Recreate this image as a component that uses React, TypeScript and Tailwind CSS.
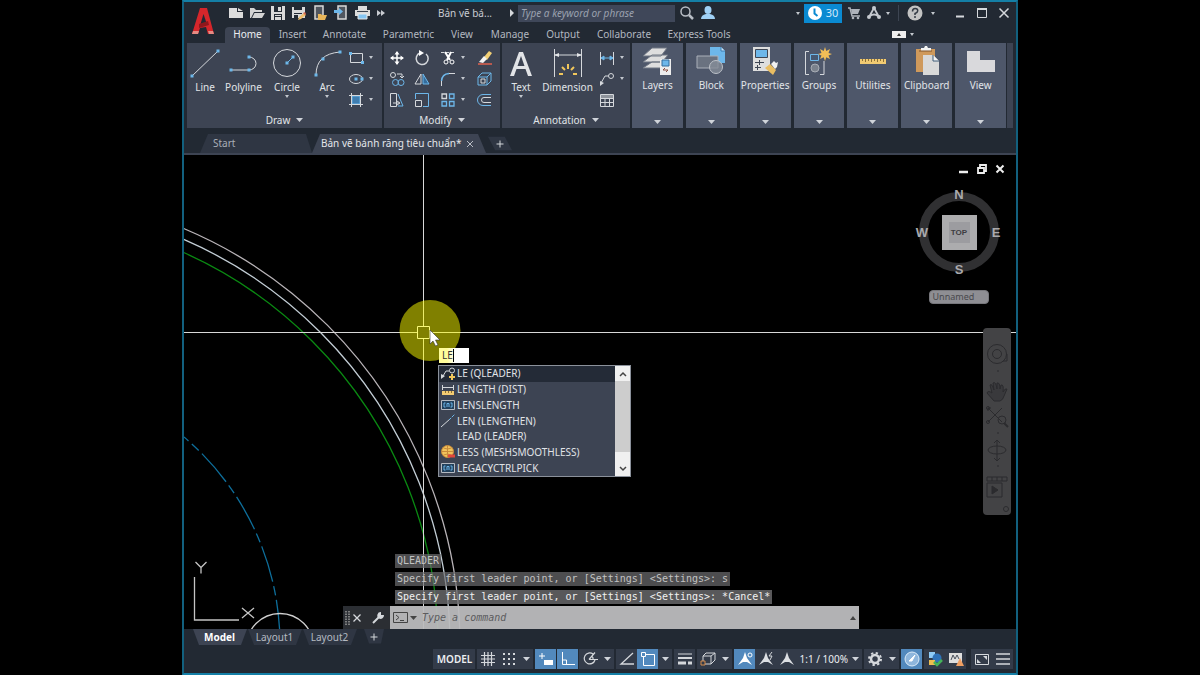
import type { ReactNode } from "react";
import clsx from "clsx";

type IconProps = {
	w?: number;
	h?: number;
	children: ReactNode;
};

function Icon({ w = 16, h = 16, children }: IconProps) {
	return (
		<svg
			width={w}
			height={h}
			viewBox={`0 0 ${w} ${h}`}
			fill="none"
			stroke="#d5d8dc"
			strokeWidth="1"
			className="shrink-0"
			aria-hidden="true"
		>
			{children}
		</svg>
	);
}

function Caret({ small = false }: { small?: boolean }) {
	return small ? (
		<svg width="4" height="3" viewBox="0 0 4 3" className="shrink-0" aria-hidden="true">
			<path d="M0 0h4L2 3z" fill="#c3c7ce" />
		</svg>
	) : (
		<svg width="7" height="4" viewBox="0 0 7 4" className="shrink-0" aria-hidden="true">
			<path d="M0 0h7L3.5 4z" fill="#d0d4da" />
		</svg>
	);
}

function Dot({ x, y }: { x: number; y: number }) {
	return <rect x={x - 1.5} y={y - 1.5} width="3" height="3" fill="#6db7ea" stroke="none" />;
}

const quickAccess: { name: string; icon: ReactNode }[] = [
	{
		name: "New",
		icon: <path d="M1 3h8v4h6v6H1zM10 3l5 3h-5z" fill="#dcdcdc" stroke="none" />,
	},
	{
		name: "Open",
		icon: <path d="M1 13V3h4l2 2h6v2H5L2 13zM5.500 8H16l-3 5H3z" fill="#d4d4d4" stroke="none" />,
	},
	{
		name: "Save",
		icon: (
			<>
				<path d="M1 1h14v14H1z" fill="#d9d9d9" stroke="none" />
				<path d="M4 1h8v6H4zM4 9h8v6H4z" fill="#222933" stroke="none" />
				<path d="M8 2h3v4H8zM5 10h6v1H5zM5 12h6v3H5z" fill="#d9d9d9" stroke="none" />
			</>
		),
	},
	{
		name: "Save As",
		icon: (
			<>
				<path d="M1 2h13v11H1z" fill="#d9d9d9" stroke="none" />
				<path d="M3 2h8v3H3zM3 8h8v1H3zM3 10h4v3H3z" fill="#222933" stroke="none" />
				<path d="M7 15l1-3 5-4 2 2-5 4z" fill="#f0c070" stroke="none" />
				<path d="M12 8l2-1 1 2-1 1z" fill="#d96b52" stroke="none" />
			</>
		),
	},
	{
		name: "Open from Web & Mobile",
		icon: (
			<>
				<path d="M3 1h8v13H3z" fill="#50565f" stroke="#d9d9d9" strokeWidth="1.500" />
				<path d="M6 15V9h3l1 1h5l-2 5H6z" fill="#e9b659" stroke="none" />
			</>
		),
	},
	{
		name: "Save to Web & Mobile",
		icon: (
			<>
				<path d="M5 1h8v13H5z" fill="#50565f" stroke="#d9d9d9" strokeWidth="1.500" />
				<path d="M1 5h5V3l4 3.500L6 10V8H1z" fill="#6db7ea" stroke="none" />
			</>
		),
	},
	{
		name: "Plot",
		icon: (
			<>
				<path d="M4 1h9v4H4zM1 5h15v6H1z" fill="#dcdcdc" stroke="none" />
				<path d="M3 6h11v1H3z" fill="#3b4350" stroke="none" />
				<path d="M4 9h9v5H4z" fill="#85c5f2" stroke="#e8e8e8" />
			</>
		),
	},
];

function TitleBar() {
	return (
		<div className="flex h-[22px] items-center pr-px text-[#c9ccd2]">
			<div className="flex w-[213px] items-center">
				{quickAccess.map((item) => (
					<button
						key={item.name}
						type="button"
						aria-label={item.name}
						className="flex w-[21px] shrink-0 justify-center"
					>
						<Icon>{item.icon}</Icon>
					</button>
				))}
				<button type="button" aria-label="More" className="ml-1">
					<Icon w={10} h={8}>
						<path d="M1 1l4 3-4 3zM5 1l4 3-4 3z" fill="#c9ccd2" stroke="none" />
					</Icon>
				</button>
			</div>
			<span className="w-[72px] whitespace-nowrap text-[10px]">Bản vẽ bá...</span>
			<svg width="4" height="8" viewBox="0 0 4 8" aria-hidden="true">
				<path d="M0 0l4 4-4 4z" fill="#d5d8dc" />
			</svg>
			<input
				aria-label="Search"
				placeholder="Type a keyword or phrase"
				className="ml-1 h-[17px] w-[157px] min-w-0 bg-[#3f4759] px-[3px] text-[10px] italic outline-none placeholder:text-[#9ba2af]"
			/>
			<button type="button" aria-label="Search help" className="ml-1">
				<Icon>
					<circle cx="6.500" cy="6.500" r="4.500" strokeWidth="1.500" stroke="#b9bec6" />
					<path d="M10 10l4 4" strokeWidth="2.500" stroke="#b9bec6" />
				</Icon>
			</button>
			<button type="button" aria-label="Account" className="ml-[5px]">
				<Icon>
					<ellipse cx="8" cy="5" rx="3.500" ry="4" fill="#9fd0f5" stroke="none" />
					<path d="M1 14q0-4 5-5h4q5 1 5 5z" fill="#9fd0f5" stroke="none" />
				</Icon>
			</button>
			<div className="ml-auto flex h-full items-center">
				<Caret small />
				<button
					type="button"
					className="ml-1 flex h-[19px] w-[38px] items-center justify-center gap-1 bg-[#0a8ad2] text-[11px] text-[#cfe8fa]"
				>
					<Icon w={14} h={14}>
						<circle cx="7" cy="7" r="7" fill="#fff" stroke="none" />
						<path d="M6.500 2.500v5l3 2.500" stroke="#0a8ad2" strokeWidth="2" />
					</Icon>
					30
				</button>
				<button type="button" aria-label="App Store" className="ml-1">
					<Icon>
						<path d="M2 3h2l2 8h8" stroke="#aeb3bb" strokeWidth="1.500" />
						<path d="M5 4h9l-2 5H6z" fill="#aeb3bb" stroke="none" />
						<circle cx="7" cy="13" r="1.300" fill="#aeb3bb" stroke="none" />
						<circle cx="12" cy="13" r="1.300" fill="#aeb3bb" stroke="none" />
					</Icon>
				</button>
				<button type="button" aria-label="Autodesk App" className="ml-1 flex items-center gap-1">
					<Icon>
						<path d="M8 3L3 12M8 3l5 9M4 11q4-3 8 0" stroke="#c5c9cf" strokeWidth="1.800" />
						<circle cx="8" cy="3" r="2" fill="#c5c9cf" stroke="none" />
						<circle cx="3" cy="12" r="2" fill="#c5c9cf" stroke="none" />
						<circle cx="13" cy="12" r="2" fill="#c5c9cf" stroke="none" />
					</Icon>
					<Caret small />
				</button>
				<span className="mx-2 h-4 w-px bg-[#3d4552]" />
				<button type="button" aria-label="Help" className="flex items-center gap-2">
					<Icon>
						<circle cx="8" cy="8" r="7.500" fill="#c3c3c3" stroke="none" />
						<path d="M5.500 6.500q0-3 2.700-3t2.500 2.300Q10.500 7.500 8 8.500v1.500" stroke="#333a44" strokeWidth="1.500" />
						<circle cx="8" cy="12" r="1" fill="#333a44" stroke="none" />
					</Icon>
					<Caret small />
				</button>
				<button type="button" aria-label="Minimize" className="ml-[14px] flex w-[22px] justify-center">
					<Icon w={12} h={12}>
						<path d="M2 9.500h8" strokeWidth="2" />
					</Icon>
				</button>
				<button type="button" aria-label="Maximize" className="flex w-[22px] justify-center">
					<Icon w={12} h={12}>
						<path d="M1.500 1.500h9v9h-9z" />
						<path d="M1 2h10" strokeWidth="2" />
					</Icon>
				</button>
				<button type="button" aria-label="Close" className="flex w-[22px] justify-center">
					<Icon w={12} h={12}>
						<path d="M1.500 1.500l9 9M10.500 1.500l-9 9" strokeWidth="1.500" />
					</Icon>
				</button>
			</div>
		</div>
	);
}

const ribbonTabs = [
	{ name: "Home", width: "w-[45px]" },
	{ name: "Insert", width: "w-[45px]" },
	{ name: "Annotate", width: "w-[59px]" },
	{ name: "Parametric", width: "w-[69px]" },
	{ name: "View", width: "w-[38px]" },
	{ name: "Manage", width: "w-[58px]" },
	{ name: "Output", width: "w-[48px]" },
	{ name: "Collaborate", width: "w-[74px]" },
	{ name: "Express Tools", width: "w-[76px]" },
];

function RibbonTabs() {
	return (
		<nav className="flex h-[19px] items-end text-[10px] text-[#b3b8c0]">
			{ribbonTabs.map((tab) => (
				<button
					key={tab.name}
					type="button"
					className={clsx(
						"h-4 shrink-0 whitespace-nowrap pb-[2px] text-center leading-[14px]",
						tab.width,
						tab.name === "Home" && "rounded-t-sm bg-[#3d4453] text-[#eceef1]",
					)}
				>
					{tab.name}
				</button>
			))}
			<button type="button" aria-label="Minimize ribbon" className="ml-auto mr-[102px] flex h-[18px] items-center gap-1">
				<Icon w={14} h={7}>
					<path d="M0 0h14v7H0z" fill="#eee" stroke="none" />
					<path d="M5 5h4L7 2z" fill="#333" stroke="none" />
				</Icon>
				<Caret small />
			</button>
		</nav>
	);
}

type LargeToolProps = {
	label: string;
	width: string;
	caret?: boolean;
	children: ReactNode;
};

function LargeTool({ label, width, caret, children }: LargeToolProps) {
	return (
		<button type="button" className={clsx("flex shrink-0 flex-col items-center", width)}>
			{children}
			<span className="whitespace-nowrap leading-4">{label}</span>
			{caret ? <Caret small /> : null}
		</button>
	);
}

function SmallTool({ label, caret, children }: { label: string; caret?: boolean; children: ReactNode }) {
	return (
		<button type="button" aria-label={label} className="flex h-[21px] items-center gap-[5px]">
			<Icon>{children}</Icon>
			{caret ? <Caret small /> : null}
		</button>
	);
}

type PanelProps = {
	title: string;
	width: string;
	children: ReactNode;
};

function Panel({ title, width, children }: PanelProps) {
	return (
		<section className={clsx("flex shrink-0 flex-col bg-[#3d4453]", width)}>
			<div className="flex h-[68px] pt-1">{children}</div>
			<button type="button" className="flex h-[17px] items-center justify-center gap-[6px] leading-4">
				{title}
				<Caret />
			</button>
		</section>
	);
}

function DrawPanel() {
	return (
		<Panel title="Draw" width="w-[195px]">
			<LargeTool label="Line" width="w-[36px]">
				<Icon w={32} h={32}>
					<path d="M3 29L29 4" />
					<Dot x={3} y={29} />
					<Dot x={29} y={4} />
				</Icon>
			</LargeTool>
			<LargeTool label="Polyline" width="w-[41px]">
				<Icon w={32} h={32}>
					<path d="M3 23h18a7 6.500 0 0 0 0-13" />
					<Dot x={3} y={23} />
					<Dot x={21} y={23} />
					<Dot x={21} y={10} />
				</Icon>
			</LargeTool>
			<LargeTool label="Circle" width="w-[46px]" caret>
				<Icon w={32} h={32}>
					<circle cx="16" cy="16" r="13.500" />
					<path d="M16 16l6-6" stroke="#6db7ea" />
					<Dot x={16} y={16} />
					<Dot x={22} y={10} />
				</Icon>
			</LargeTool>
			<LargeTool label="Arc" width="w-[34px]" caret>
				<Icon w={32} h={32}>
					<path d="M5 28Q5 7 29 5" />
					<Dot x={5} y={28} />
					<Dot x={12} y={12} />
					<Dot x={29} y={5} />
				</Icon>
			</LargeTool>
			<div className="ml-1 flex flex-col">
				<SmallTool label="Rectangle" caret>
					<path d="M2.500 3.500h12v9h-12z" />
					<Dot x={2.5} y={3.5} />
					<Dot x={14.5} y={12.5} />
				</SmallTool>
				<SmallTool label="Ellipse" caret>
					<ellipse cx="8" cy="8" rx="6.500" ry="4.500" />
					<Dot x={8} y={8} />
					<Dot x={14} y={8} />
				</SmallTool>
				<SmallTool label="Hatch" caret>
					<path d="M4 4h8v8H4z" fill="#3f7db0" stroke="#6db7ea" />
					<path d="M1 3.500h14M1 12.500h14M3.500 1v14M12.500 1v14" />
				</SmallTool>
			</div>
		</Panel>
	);
}

function ModifyPanel() {
	return (
		<Panel title="Modify" width="w-[116px]">
			<div className="ml-[5px] grid h-[63px] grid-cols-[25px_26px_36px_20px]">
				<SmallTool label="Move">
					<path d="M8 2v12M2 8h12" strokeWidth="1.500" stroke="#fff" />
					<path d="M8 1l2.500 3.500h-5zM8 15l2.500-3.500h-5zM1 8l3.500-2.500v5zM15 8l-3.500-2.500v5z" fill="#fff" stroke="none" />
				</SmallTool>
				<SmallTool label="Rotate">
					<path d="M6 3a6 6 0 1 0 6 1" strokeWidth="1.500" />
					<path d="M5 0l5 3-5 3z" fill="#fff" stroke="none" />
				</SmallTool>
				<SmallTool label="Trim" caret>
					<path d="M1 2.500h14" strokeDasharray="3 2" />
					<path d="M5 2l5 8M11 2L7 10" stroke="#fff" strokeWidth="2" />
					<circle cx="6" cy="12" r="2" stroke="#fff" />
					<circle cx="12" cy="12" r="2" stroke="#fff" />
				</SmallTool>
				<SmallTool label="Erase">
					<path d="M8 7l5-6 3 2-5 7z" fill="#f2cf75" stroke="none" />
					<path d="M3 12l5-6 3 3-4 4z" fill="#f3f3f3" stroke="none" />
					<path d="M2 14h14" stroke="#e0604c" strokeWidth="1.500" />
				</SmallTool>
				<SmallTool label="Copy">
					<circle cx="4" cy="4" r="2.500" />
					<path d="M8 3h5v3M11 5l2 2 2-2" />
					<circle cx="6.500" cy="11.500" r="3" stroke="#6db7ea" />
					<circle cx="12" cy="11.500" r="3" stroke="#6db7ea" />
				</SmallTool>
				<SmallTool label="Mirror">
					<path d="M7 3v10H1z" />
					<path d="M9 3v10h6z" fill="#356d9c" stroke="#6db7ea" />
				</SmallTool>
				<SmallTool label="Fillet" caret>
					<path d="M1.500 15V9" stroke="#d5d8dc" />
					<path d="M1.500 10Q2 3 9 2.500" stroke="#6db7ea" strokeWidth="1.500" />
					<path d="M9 2.500h6" />
				</SmallTool>
				<SmallTool label="Explode">
					<path d="M2 6h9v8H2zM2 6l4-4h9l-4 4M15 2v8l-4 4" stroke="#6db7ea" />
					<path d="M5 8h4v4H5z" />
				</SmallTool>
				<SmallTool label="Stretch">
					<path d="M1.500 1.500h6v13h-6z" />
					<path d="M9 2l5 12H9" stroke="#6db7ea" />
					<path d="M4 11h6M8 9l3 2-3 2" />
				</SmallTool>
				<SmallTool label="Scale">
					<path d="M1.500 7V1.500h13v13H9" stroke="#6db7ea" />
					<path d="M1.500 8.500h6v6h-6z" />
				</SmallTool>
				<SmallTool label="Array" caret>
					<path d="M2 2h4.500v4.500H2z" strokeWidth="1.300" />
					<path d="M9.500 2H14v4.500H9.500zM2 9.500h4.500V14H2zM9.500 9.500H14V14H9.500z" stroke="#6db7ea" strokeWidth="1.300" />
				</SmallTool>
				<SmallTool label="Offset">
					<path d="M15 2.500H7a5.500 5.500 0 0 0 0 11h8" stroke="#6db7ea" />
					<path d="M15 5.500H8a2.500 2.500 0 0 0 0 5h7" />
				</SmallTool>
			</div>
		</Panel>
	);
}

function AnnotationPanel() {
	return (
		<Panel title="Annotation" width="w-[128px]">
			<LargeTool label="Text" width="w-[38px]" caret>
				<Icon w={32} h={32}>
					<path d="M5 29L14 5h4l9 24h-4l-2.500-7h-9L9 29zM12.500 19h7L16 9z" fill="#e2e4e7" stroke="none" />
				</Icon>
			</LargeTool>
			<LargeTool label="Dimension" width="w-[55px]">
				<Icon w={32} h={32}>
					<path d="M2.500 2v28M29.500 2v28M3 8h26" />
					<path d="M2 8l5-2v4zM30 8l-5-2v4z" fill="#e2e4e7" stroke="none" />
					<path d="M16 17v5M10 20l3 3M22 20l-3 3M7 27h4M21 27h4" stroke="#f1c75c" strokeWidth="2" />
				</Icon>
			</LargeTool>
			<div className="ml-1 flex flex-col">
				<SmallTool label="Linear" caret>
					<path d="M1.500 2v13M14.500 2v13" />
					<path d="M2 8h12M2 8l3-2v4zM14 8l-3-2v4z" stroke="#6db7ea" fill="#6db7ea" />
				</SmallTool>
				<SmallTool label="Leader" caret>
					<circle cx="12" cy="5" r="2.500" />
					<path d="M9.500 5H6L2 12" />
					<path d="M1 15v-5l4 2z" fill="#d5d8dc" stroke="none" />
				</SmallTool>
				<SmallTool label="Table">
					<path d="M1.500 2.500h13v12h-13zM1 6.500h14M1 10.500h14M6 6v8M10.500 6v8" />
					<path d="M2 3h12v3H2z" fill="#8f949c" stroke="none" />
				</SmallTool>
			</div>
		</Panel>
	);
}

const collapsedPanels: { name: string; icon: ReactNode }[] = [
	{
		name: "Layers",
		icon: (
			<>
				<path d="M2 23L11 17h16l-7 6zM2 17l9-7h16l-6 7zM2 11L11 3h15l-6 8z" fill="#dedede" stroke="#6f7683" />
				<path d="M19 14h11v16H19z" fill="#ededed" stroke="none" />
				<path d="M21 15h7v6h-7z" fill="#6db7ea" stroke="#356d9c" />
				<path d="M22 25h5M24 23l-2 2M25 27l2-2" stroke="#8a4f42" />
			</>
		),
	},
	{
		name: "Block",
		icon: (
			<>
				<path d="M15 2h11l4 4v12H15z" fill="#6db7ea" stroke="none" />
				<path d="M26 2v4h4" fill="#c7e5fa" stroke="#3f7db0" />
				<path d="M2 11h21v12H2z" fill="#6a7280" stroke="#aab0b9" />
				<circle cx="21" cy="22" r="6.500" fill="#858c97" fillOpacity=".8" stroke="#bcc1c8" />
			</>
		),
	},
	{
		name: "Properties",
		icon: (
			<>
				<path d="M4 2h17v24H4z" fill="#dedede" stroke="none" />
				<path d="M6.500 4.500h12v8h-12z" fill="#6db7ea" stroke="#3e4654" />
				<path d="M6 17.500h9M6 22.500h6M10.500 15v5M8.500 20v5" stroke="#3e4654" />
				<path d="M16 23l5-4 6 6-3 5z" fill="#e9bd62" stroke="none" />
				<path d="M22 19l3-3 2 2 2-1-1 5-2 2z" fill="#f1f1f1" stroke="none" />
			</>
		),
	},
	{
		name: "Groups",
		icon: (
			<>
				<path d="M6 6.500H2.500v23H6M17 29.500h4V16" />
				<path d="M7.500 9.500h8v6h-8z" fill="#465871" stroke="#6db7ea" />
				<circle cx="12" cy="23" r="4" fill="#7b828d" stroke="#a8adb5" />
				<path d="M22 2l1.300 4L27 4l-1.500 4L29 9l-3.500 1.500L27 14l-3.700-1.700L22 16l-1.300-3.700L17 14l1.500-3.500L15 9l3.500-1L17 4l3.700 2z" fill="#f1bd57" stroke="none" />
			</>
		),
	},
	{
		name: "Utilities",
		icon: (
			<>
				<path d="M3 14h26v5H3z" fill="#f2cb72" stroke="none" />
				<path d="M5.500 14v2M8.500 14v3M11.500 14v2M14.500 14v3M17.500 14v2M20.500 14v3M23.500 14v2M26.500 14v3" stroke="#8c7137" />
			</>
		),
	},
	{
		name: "Clipboard",
		icon: (
			<>
				<path d="M5 4h19v23H5z" fill="#cf995b" stroke="none" />
				<path d="M10 6V3h3l1-2h2l1 2h3v3z" fill="#f4f4f4" stroke="none" />
				<path d="M8 6h13" stroke="#80552a" />
				<path d="M12 10h10l6 6v14H12z" fill="#d9d9d9" stroke="none" />
				<path d="M22 10v6h6" fill="#f4f4f4" stroke="#3e5c78" />
			</>
		),
	},
	{
		name: "View",
		icon: <path d="M2 6h13v9h15v12H2z" fill="#d9d9dc" stroke="none" />,
	},
];

function Ribbon() {
	return (
		<div className="mx-[3px] flex h-[85px] gap-[2px] text-[10px] text-[#e1e4e8]">
			<DrawPanel />
			<ModifyPanel />
			<AnnotationPanel />
			<div className="flex flex-1 gap-[3px]">
				{collapsedPanels.map((panel) => (
					<button
						key={panel.name}
						type="button"
						className="flex min-w-0 flex-1 flex-col items-center bg-[#4e576a] pt-[2px]"
					>
						<Icon w={32} h={32}>
							{panel.icon}
						</Icon>
						<span className="whitespace-nowrap leading-4">{panel.name}</span>
						<span className="mb-1 mt-auto">
							<Caret />
						</span>
					</button>
				))}
				<div className="-ml-[2px] w-[6px] bg-[#3d4453]" />
			</div>
		</div>
	);
}

function DocumentTabs() {
	return (
		<div className="flex h-[27px] items-end border-b-2 border-[#3d4453] pl-4 text-[10px]">
			<button
				type="button"
				className="h-[19px] w-[112px] bg-[#2f3643] pl-[13px] text-left text-[#a9aeb7] [clip-path:polygon(8px_0,106px_0,112px_100%,0_100%)]"
			>
				Start
			</button>
			<div className="flex h-[19px] w-[174px] items-center justify-between bg-[#3d4453] pl-[9px] pr-[12px] text-[#e4e6ea] [clip-path:polygon(8px_0,166px_0,100%_100%,0_100%)]">
				<button type="button" className="whitespace-nowrap">
					Bản vẽ bánh răng tiêu chuẩn*
				</button>
				<button type="button" aria-label="Close drawing">
					<Icon w={8} h={8}>
						<path d="M1 1l6 6M7 1L1 7" stroke="#b9bdc5" />
					</Icon>
				</button>
			</div>
			<button
				type="button"
				aria-label="New drawing"
				className="ml-[2px] flex h-[19px] w-6 items-center justify-center bg-[#2f3643] [clip-path:polygon(0_15%,70%_15%,100%_85%,30%_85%)]"
			>
				<Icon w={8} h={8}>
					<path d="M4 .5v7M.5 4h7" />
				</Icon>
			</button>
		</div>
	);
}

function Drawing() {
	return (
		<svg className="absolute inset-0 h-full w-full" fill="none" aria-hidden="true">
			{/* gear outline, pitch circle and bore, all around one centre */}
			<g transform="translate(-184 -155)">
				<circle cx="8" cy="645" r="452" stroke="#b9b4b8" strokeWidth="1.300" />
				<circle cx="8" cy="645" r="442" stroke="#c3ced6" strokeWidth="1.300" />
				<circle cx="8" cy="645" r="430" stroke="#0a8a12" strokeWidth="1.300" />
				<path
					d="M184 437A272 272 0 0 1 280 645"
					stroke="#0e6f9c"
					strokeWidth="1.300"
					strokeDasharray="37 4.500 9.500 4.500"
					strokeDashoffset="31"
				/>
				<circle cx="280" cy="647" r="33.500" stroke="#d0d0d0" strokeWidth="1.300" />
				<path d="M194.500 577v43H239" stroke="#c4c4c4" strokeWidth="1.300" />
				<path d="M242 608l12 10M254 608l-12 10M195.500 562l5.500 5.500 5.500-5.500M201 567.500v6" stroke="#c4c4c4" strokeWidth="1.300" />
				<path d="M423.500 155v2000M184 332.500h3000" stroke="#d8d8d8" />
				<path d="M417.500 326.500h12v12h-12z" fill="#000" stroke="#f2f2f2" />
				<circle cx="430" cy="330.500" r="30.500" fill="#ffff00" fillOpacity=".5" />
				<path d="M430 330v14l3-3 2.500 5 2.500-1-2.500-5h4.500z" fill="#fff" stroke="#333" strokeWidth=".6" />
			</g>
		</svg>
	);
}

function VariableIcon() {
	return (
		<>
			<path d="M.5 2.500h13v9H.5z" fill="#23415c" stroke="#b5bac2" />
			<path d="M4.500 5H3v4h1.500M9.500 5H11v4H9.500M6 9V5.500h2V9" stroke="#6db7ea" />
		</>
	);
}

const suggestions: { text: string; icon?: ReactNode }[] = [
	{
		text: "LE (QLEADER)",
		icon: (
			<>
				<circle cx="11" cy="3.500" r="2.500" />
				<path d="M8.500 4H5L2 9" />
				<path d="M0 12V7l4 2z" fill="#d5d8dc" stroke="none" />
				<path d="M11 7v6M8 10h6" stroke="#f1c75c" strokeWidth="2" />
			</>
		),
	},
	{
		text: "LENGTH (DIST)",
		icon: (
			<>
				<path d="M1.500 2v5M12.500 2v5M2 4.500h10" />
				<path d="M1 8h12v4H1z" fill="#f2cb72" stroke="none" />
				<path d="M4.500 8v2M7.500 8v2M10.500 8v2" stroke="#8c7137" />
			</>
		),
	},
	{ text: "LENSLENGTH", icon: <VariableIcon /> },
	{
		text: "LEN (LENGTHEN)",
		icon: (
			<>
				<path d="M0 13l9-8" />
				<path d="M8 6l6-6" stroke="#6db7ea" strokeDasharray="3 1" />
			</>
		),
	},
	{ text: "LEAD (LEADER)" },
	{
		text: "LESS (MESHSMOOTHLESS)",
		icon: (
			<>
				<circle cx="6.500" cy="6.500" r="6" fill="#f0c35c" stroke="#c98b3a" />
				<path d="M6.500 1v11M1 6.500h11M2.500 3q4 2 8 0M2.500 10q4-2 8 0" stroke="#c98b3a" />
				<path d="M7 11h7" stroke="#e0483c" strokeWidth="3" />
			</>
		),
	},
	{ text: "LEGACYCTRLPICK", icon: <VariableIcon /> },
];

function CommandPopup() {
	return (
		<div className="absolute left-[254px] top-[193px] w-[193px]">
			<input
				aria-label="Dynamic input"
				defaultValue="LE"
				className="ml-px block h-[15px] w-[30px] bg-[linear-gradient(90deg,#fffd9a_8px,#fff_16px)] pl-[3px] text-[10px] text-[#333] outline-none"
			/>
			<span className="absolute left-[15px] top-[1px] h-[13px] w-px bg-black" />
			<div className="mt-[2px] flex h-[112px] border border-[#8b919b] bg-[#3d4453]">
				<ul className="flex flex-1 flex-col text-[10px] text-[#e0e3e7]">
					{suggestions.map((item, index) => (
						<li
							key={item.text}
							className={clsx("flex flex-1 items-center gap-[2px] pl-[2px]", index === 0 && "bg-[#242b37]")}
						>
							<Icon w={14} h={14}>
								{item.icon}
							</Icon>
							<span className="whitespace-nowrap">{item.text}</span>
						</li>
					))}
				</ul>
				<div className="flex w-[15px] flex-col justify-between bg-[#cdcdcd]">
					<button type="button" aria-label="Scroll up" className="flex h-[15px] items-center justify-center bg-[#f0f0f0]">
						<Icon w={8} h={6}>
							<path d="M1 5l3-3 3 3" stroke="#444" strokeWidth="1.500" />
						</Icon>
					</button>
					<button type="button" aria-label="Scroll down" className="flex h-6 items-end justify-center bg-[#f0f0f0] pb-1">
						<Icon w={8} h={6}>
							<path d="M1 1l3 3 3-3" stroke="#444" strokeWidth="1.500" />
						</Icon>
					</button>
				</div>
			</div>
		</div>
	);
}

function ViewCube() {
	return (
		<div className="absolute right-[10px] top-[8px] flex w-[95px] flex-col items-center">
			<div className="flex gap-[6px] self-end">
				<button type="button" aria-label="Minimize drawing">
					<Icon w={12} h={12}>
						<path d="M1 9h9" stroke="#eee" strokeWidth="2.500" />
					</Icon>
				</button>
				<button type="button" aria-label="Restore drawing">
					<Icon w={12} h={12}>
						<path d="M2 5h6v5H2zM4 4V2h6v6H8" stroke="#eee" strokeWidth="1.800" />
					</Icon>
				</button>
				<button type="button" aria-label="Close drawing window">
					<Icon w={12} h={12}>
						<path d="M2.500 2.500l7 7M9.500 2.500l-7 7" stroke="#eee" strokeWidth="2" />
					</Icon>
				</button>
			</div>
			<svg width="90" height="94" viewBox="0 0 90 94" className="mt-[10px]" aria-label="View cube">
				<circle cx="45" cy="47" r="35.500" fill="none" stroke="#303032" strokeWidth="9" />
				<path d="M28 30h35v35H28z" fill="#acacae" />
				<path d="M35 37h21v21H35z" fill="#9c9ca0" />
				<g fontFamily="Liberation Sans, sans-serif" fontWeight="bold" textAnchor="middle" fill="#aaaaad">
					<text x="45" y="14" fontSize="13">N</text>
					<text x="45" y="89" fontSize="13">S</text>
					<text x="8" y="52" fontSize="13">W</text>
					<text x="82" y="52" fontSize="13">E</text>
					<text x="45" y="50" fontSize="8" fill="#3d3d42">TOP</text>
				</g>
			</svg>
			<button
				type="button"
				className="mt-[11px] h-[14px] w-[60px] rounded-sm border border-[#77777c] bg-[#8e8e93] pl-[3px] text-left text-[9px] leading-3 text-[#48484d]"
			>
				Unnamed
			</button>
		</div>
	);
}

function NavigationBar() {
	return (
		<div className="absolute right-[5px] top-[173px] h-[187px] w-7 rounded-sm bg-[#434345]">
			<svg width="28" height="187" viewBox="0 0 28 187" fill="none" stroke="#2b2b2e" aria-label="Navigation bar">
				<circle cx="14" cy="26" r="9.500" />
				<circle cx="14" cy="26" r="4.500" />
				<path d="M20 33h4v-7M14 43h2M14 105h2M14 138h2" />
				<path d="M11 73l-7-8q1-3 5 0l-2-8q2-2 4 5l-1-7q3-2 4 6v-6q3-1 3 6l1-4q3-1 2 7 2-4 4-3l-3 7q-1 4-4 5z" fill="#39393c" />
				<path d="M5 80l14 14M19 80L5 94M5 80h3M5 80v3" />
				<circle cx="5" cy="80" r="1.500" />
				<circle cx="5" cy="94" r="1.500" />
				<circle cx="19" cy="92" r="4" />
				<path d="M21 95l4 4" strokeWidth="2" />
				<path d="M14 112v21M11 115l3-3 3 3M11 130l3 3 3-3" />
				<ellipse cx="14" cy="122" rx="9" ry="4" />
				<path d="M4 149h20v4H4zM4 155h15v14H4zM9 149v4M14 149v4M19 149v4" />
				<path d="M9 158l6 4-6 4z" fill="#2b2b2e" />
				<circle cx="23" cy="181" r="2.500" />
			</svg>
		</div>
	);
}

function CommandLine() {
	return (
		<div className="absolute bottom-0 left-[159px] w-[516px] font-['DejaVu_Sans_Mono',monospace] text-[10px] text-[#c2c2c2]">
			<div className="ml-[52px] flex flex-col items-start gap-1 pb-[2px] leading-[14px]">
				<p className="whitespace-pre bg-[#6e6e70]/70 px-[2px]">QLEADER</p>
				<p className="whitespace-pre bg-[#6e6e70]/70 px-[2px]">
					{"Specify first leader point, or [Settings] <Settings>: s"}
				</p>
				<p className="whitespace-pre bg-[#6e6e70]/80 px-[2px] text-[#f0f0f0]">
					{"Specify first leader point, or [Settings] <Settings>: *Cancel*"}
				</p>
			</div>
			<div className="flex h-[23px]">
				<div className="flex w-[47px] items-center bg-[#2b2e33] pl-[2px]">
					<Icon w={5} h={16}>
						<path d="M1 1v14M4 1v14" stroke="#999" strokeDasharray="1.500 1" strokeWidth="1.500" />
					</Icon>
					<button type="button" aria-label="Close command line" className="ml-[2px]">
						<Icon w={10} h={10}>
							<path d="M1.500 1.500l7 7M8.500 1.500l-7 7" strokeWidth="1.300" />
						</Icon>
					</button>
					<button type="button" aria-label="Customize" className="ml-[9px]">
						<Icon w={14} h={14}>
							<path d="M2 12l6-6" strokeWidth="2" />
							<path d="M13 4a3.500 3.500 0 0 1-5 3.500 3.500 3.500 0 0 1 2-6.500v3h3z" fill="#d5d8dc" stroke="none" />
						</Icon>
					</button>
				</div>
				<div className="flex flex-1 items-center bg-[#bcbcbe]/95 px-[3px]">
					<button type="button" aria-label="Recent commands" className="flex items-center gap-[2px]">
						<Icon w={15} h={11}>
							<path d="M.5 .5h14v10H.5z" stroke="#444" />
							<path d="M3 3l3 2.500L3 8M7 8.500h4" stroke="#444" />
						</Icon>
						<svg width="7" height="4" viewBox="0 0 7 4" aria-hidden="true">
							<path d="M0 0h7L3.500 4z" fill="#444" />
						</svg>
					</button>
					<input
						aria-label="Command"
						placeholder="Type a command"
						className="ml-[5px] min-w-0 flex-1 bg-transparent italic text-[#333] outline-none placeholder:text-[#5c5c5e]"
					/>
					<svg width="6" height="4" viewBox="0 0 6 4" aria-hidden="true">
						<path d="M0 4h6L3 0z" fill="#444" />
					</svg>
				</div>
			</div>
		</div>
	);
}

function LayoutTabs() {
	return (
		<div className="flex h-4 pl-[9px] text-[10px] leading-4 text-[#b5bac2]">
			{["Model", "Layout1", "Layout2"].map((name) => (
				<button
					key={name}
					type="button"
					className={clsx(
						"w-[55px] pr-[2px] text-center [clip-path:polygon(0_0,54px_0,48px_100%,6px_100%)]",
						name === "Model" ? "bg-[#3d4453] font-bold text-white" : "bg-[#2f3643]",
					)}
				>
					{name}
				</button>
			))}
			<button
				type="button"
				aria-label="New layout"
				className="ml-[6px] flex w-5 items-center justify-center bg-[#2f3643] [clip-path:polygon(0_0,100%_0,85%_90%,25%_90%)]"
			>
				<Icon w={8} h={8}>
					<path d="M4 .5v7M.5 4h7" />
				</Icon>
			</button>
		</div>
	);
}

type StatusToggleProps = {
	label: string;
	active?: boolean;
	children: ReactNode;
};

function StatusToggle({ label, active, children }: StatusToggleProps) {
	return (
		<button
			type="button"
			aria-label={label}
			className={clsx("flex h-5 w-[21px] items-center justify-center", active ? "bg-[#5289bd]" : "bg-[#333b49]")}
		>
			<Icon>{children}</Icon>
		</button>
	);
}

function StatusCaret({ label }: { label: string }) {
	return (
		<button type="button" aria-label={label} className="flex h-5 w-[14px] items-center justify-center bg-[#333b49]">
			<Caret />
		</button>
	);
}

const annoPath = "M8 1l2 6 5 7-5-3H6l-5 3 5-7z";

function StatusBar() {
	return (
		<div className="mt-1 flex h-5 justify-end gap-[2px] pr-[3px] text-[10px] text-[#eceef1]">
			<button type="button" className="w-[42px] bg-[#333b49] font-semibold">
				MODEL
			</button>
			<div className="flex">
				<StatusToggle label="Grid">
					<path d="M1 4.500h14M1 8h14M1 11.500h14M4.500 1v14M8 1v14M11.500 1v14" strokeWidth="1.200" />
				</StatusToggle>
				<StatusToggle label="Snap">
					<path d="M2 3h13M2 8h13M2 13h13" strokeWidth="2" strokeDasharray="2 3" />
				</StatusToggle>
				<StatusCaret label="Snap settings" />
			</div>
			<div className="flex gap-px">
				<StatusToggle label="Dynamic input" active>
					<path d="M4 2v6M1 5h6" stroke="#fff" />
					<path d="M6 9h9v5H6z" fill="#fff" stroke="none" />
				</StatusToggle>
				<StatusToggle label="Ortho" active>
					<path d="M2.500 1v12.500H15M2.500 9h4v4" stroke="#fff" />
				</StatusToggle>
				<div className="flex">
					<StatusToggle label="Polar tracking">
						<path d="M11 3a5.500 5.500 0 1 0 2 6M7 8.500h9M7 8.500l6-7M10 5.500q1.500 1 1 3" strokeWidth="1.200" />
					</StatusToggle>
					<StatusCaret label="Polar settings" />
				</div>
			</div>
			<div className="flex">
				<StatusToggle label="Object snap tracking">
					<path d="M14 2L2 13h13" strokeWidth="1.300" />
				</StatusToggle>
				<StatusToggle label="Object snap" active>
					<path d="M3.500 3.500h11v11h-11z" stroke="#fff" />
					<path d="M1.500 1.500h4v4h-4z" fill="#5289bd" stroke="#fff" />
				</StatusToggle>
				<StatusCaret label="Snap modes" />
			</div>
			<StatusToggle label="Lineweight">
				<path d="M1 3h14" />
				<path d="M1 7h14" strokeWidth="2" />
				<path d="M1 12h14" strokeWidth="3" strokeDasharray="8 2" />
			</StatusToggle>
			<div className="flex">
				<StatusToggle label="3D object snap">
					<path d="M3 5h8v8H3zM3 5l3-3h9l-4 3M15 2v7l-4 4" />
					<path d="M1 10h4v4H1z" fill="#333b49" stroke="#d58c4d" />
				</StatusToggle>
				<StatusCaret label="3D snap modes" />
			</div>
			<div className="flex">
				<StatusToggle label="Annotation visibility" active>
					<path d={annoPath} fill="#fff" stroke="none" />
					<circle cx="13" cy="4" r="2" stroke="#fff" />
				</StatusToggle>
				<StatusToggle label="Auto scale">
					<path d={annoPath} fill="#dcdfe3" stroke="none" />
					<path d="M14 1l-3 4h3l-2 4" />
				</StatusToggle>
				<button type="button" className="flex items-center gap-1 bg-[#333b49] px-[3px]">
					<Icon>
						<path d={annoPath} fill="#dcdfe3" stroke="none" />
					</Icon>
					<span className="whitespace-nowrap">1:1 / 100%</span>
					<Caret />
				</button>
			</div>
			<div className="flex">
				<StatusToggle label="Workspace">
					<circle cx="8" cy="8" r="4" strokeWidth="2.500" />
					<circle cx="8" cy="8" r="6" strokeWidth="2" strokeDasharray="2.300 2.412" />
				</StatusToggle>
				<StatusCaret label="Workspace settings" />
			</div>
			<StatusToggle label="Graphics performance" active>
				<circle cx="8" cy="8" r="7" fill="#8eb6dc" stroke="#dcebf8" />
				<path d="M5 10l6-6-3 6z" fill="#fff" stroke="#fff" />
			</StatusToggle>
			<div className="flex">
				<StatusToggle label="Trusted file">
					<path d="M2 1h6v6H2z" fill="#8fcbf6" stroke="none" />
					<circle cx="10" cy="7" r="4.500" fill="#2f72b8" stroke="none" />
					<path d="M2 9h6v5H2z" fill="#edbd50" stroke="none" />
					<path d="M7 11l3 3 5-5" stroke="#44b35a" strokeWidth="2.500" />
				</StatusToggle>
				<StatusToggle label="System variables">
					<path d="M1 2h13v10H1z" fill="#dedede" stroke="none" />
					<path d="M3 9l2-5 2 4 2-4 2 4" stroke="#4a515d" />
					<path d="M12 7l4 8H8z" fill="#ef9f62" stroke="none" />
				</StatusToggle>
			</div>
			<div className="ml-[3px] flex">
				<StatusToggle label="Clean screen">
					<path d="M1.500 3.500h13v10h-13z" />
					<path d="M9 5h4v4zM3 12h4L3 8z" fill="#d5d8dc" stroke="none" />
				</StatusToggle>
				<StatusToggle label="Customization">
					<path d="M1 3h14M1 8h14M1 13h14" strokeWidth="1.600" />
				</StatusToggle>
			</div>
		</div>
	);
}

export default function App() {
	return (
		<div className="min-h-screen bg-black px-[182px] font-['Noto_Sans',sans-serif]">
			<div className="flex h-screen flex-col border-2 border-x-[#12607e] border-y-[#147fa6] bg-[#222933]">
				<header className="flex">
					<button type="button" aria-label="Application menu" className="flex w-[41px] items-center pb-1 pl-[7px]">
						<Icon w={24} h={28}>
							<path d="M1 27L9 1h7l7 26h-6l-2-7-6 1-2 6z" fill="#d5262b" stroke="none" />
							<path d="M12.500 7l3 9-6 1z" fill="#222933" stroke="none" />
							<path d="M8 17l9-3 1 4-10 3z" fill="#8f171c" stroke="none" />
							<path d="M2 24h6l-1 3H1zM17 24h5l1 3h-5z" fill="#e58b83" stroke="none" />
						</Icon>
					</button>
					<div className="min-w-0 flex-1">
						<TitleBar />
						<RibbonTabs />
					</div>
				</header>
				<Ribbon />
				<DocumentTabs />
				<main className="relative min-h-0 flex-1 overflow-hidden bg-black">
					<Drawing />
					<CommandLine />
					<CommandPopup />
					<ViewCube />
					<NavigationBar />
				</main>
				<footer className="pb-1">
					<LayoutTabs />
					<StatusBar />
				</footer>
			</div>
		</div>
	);
}
